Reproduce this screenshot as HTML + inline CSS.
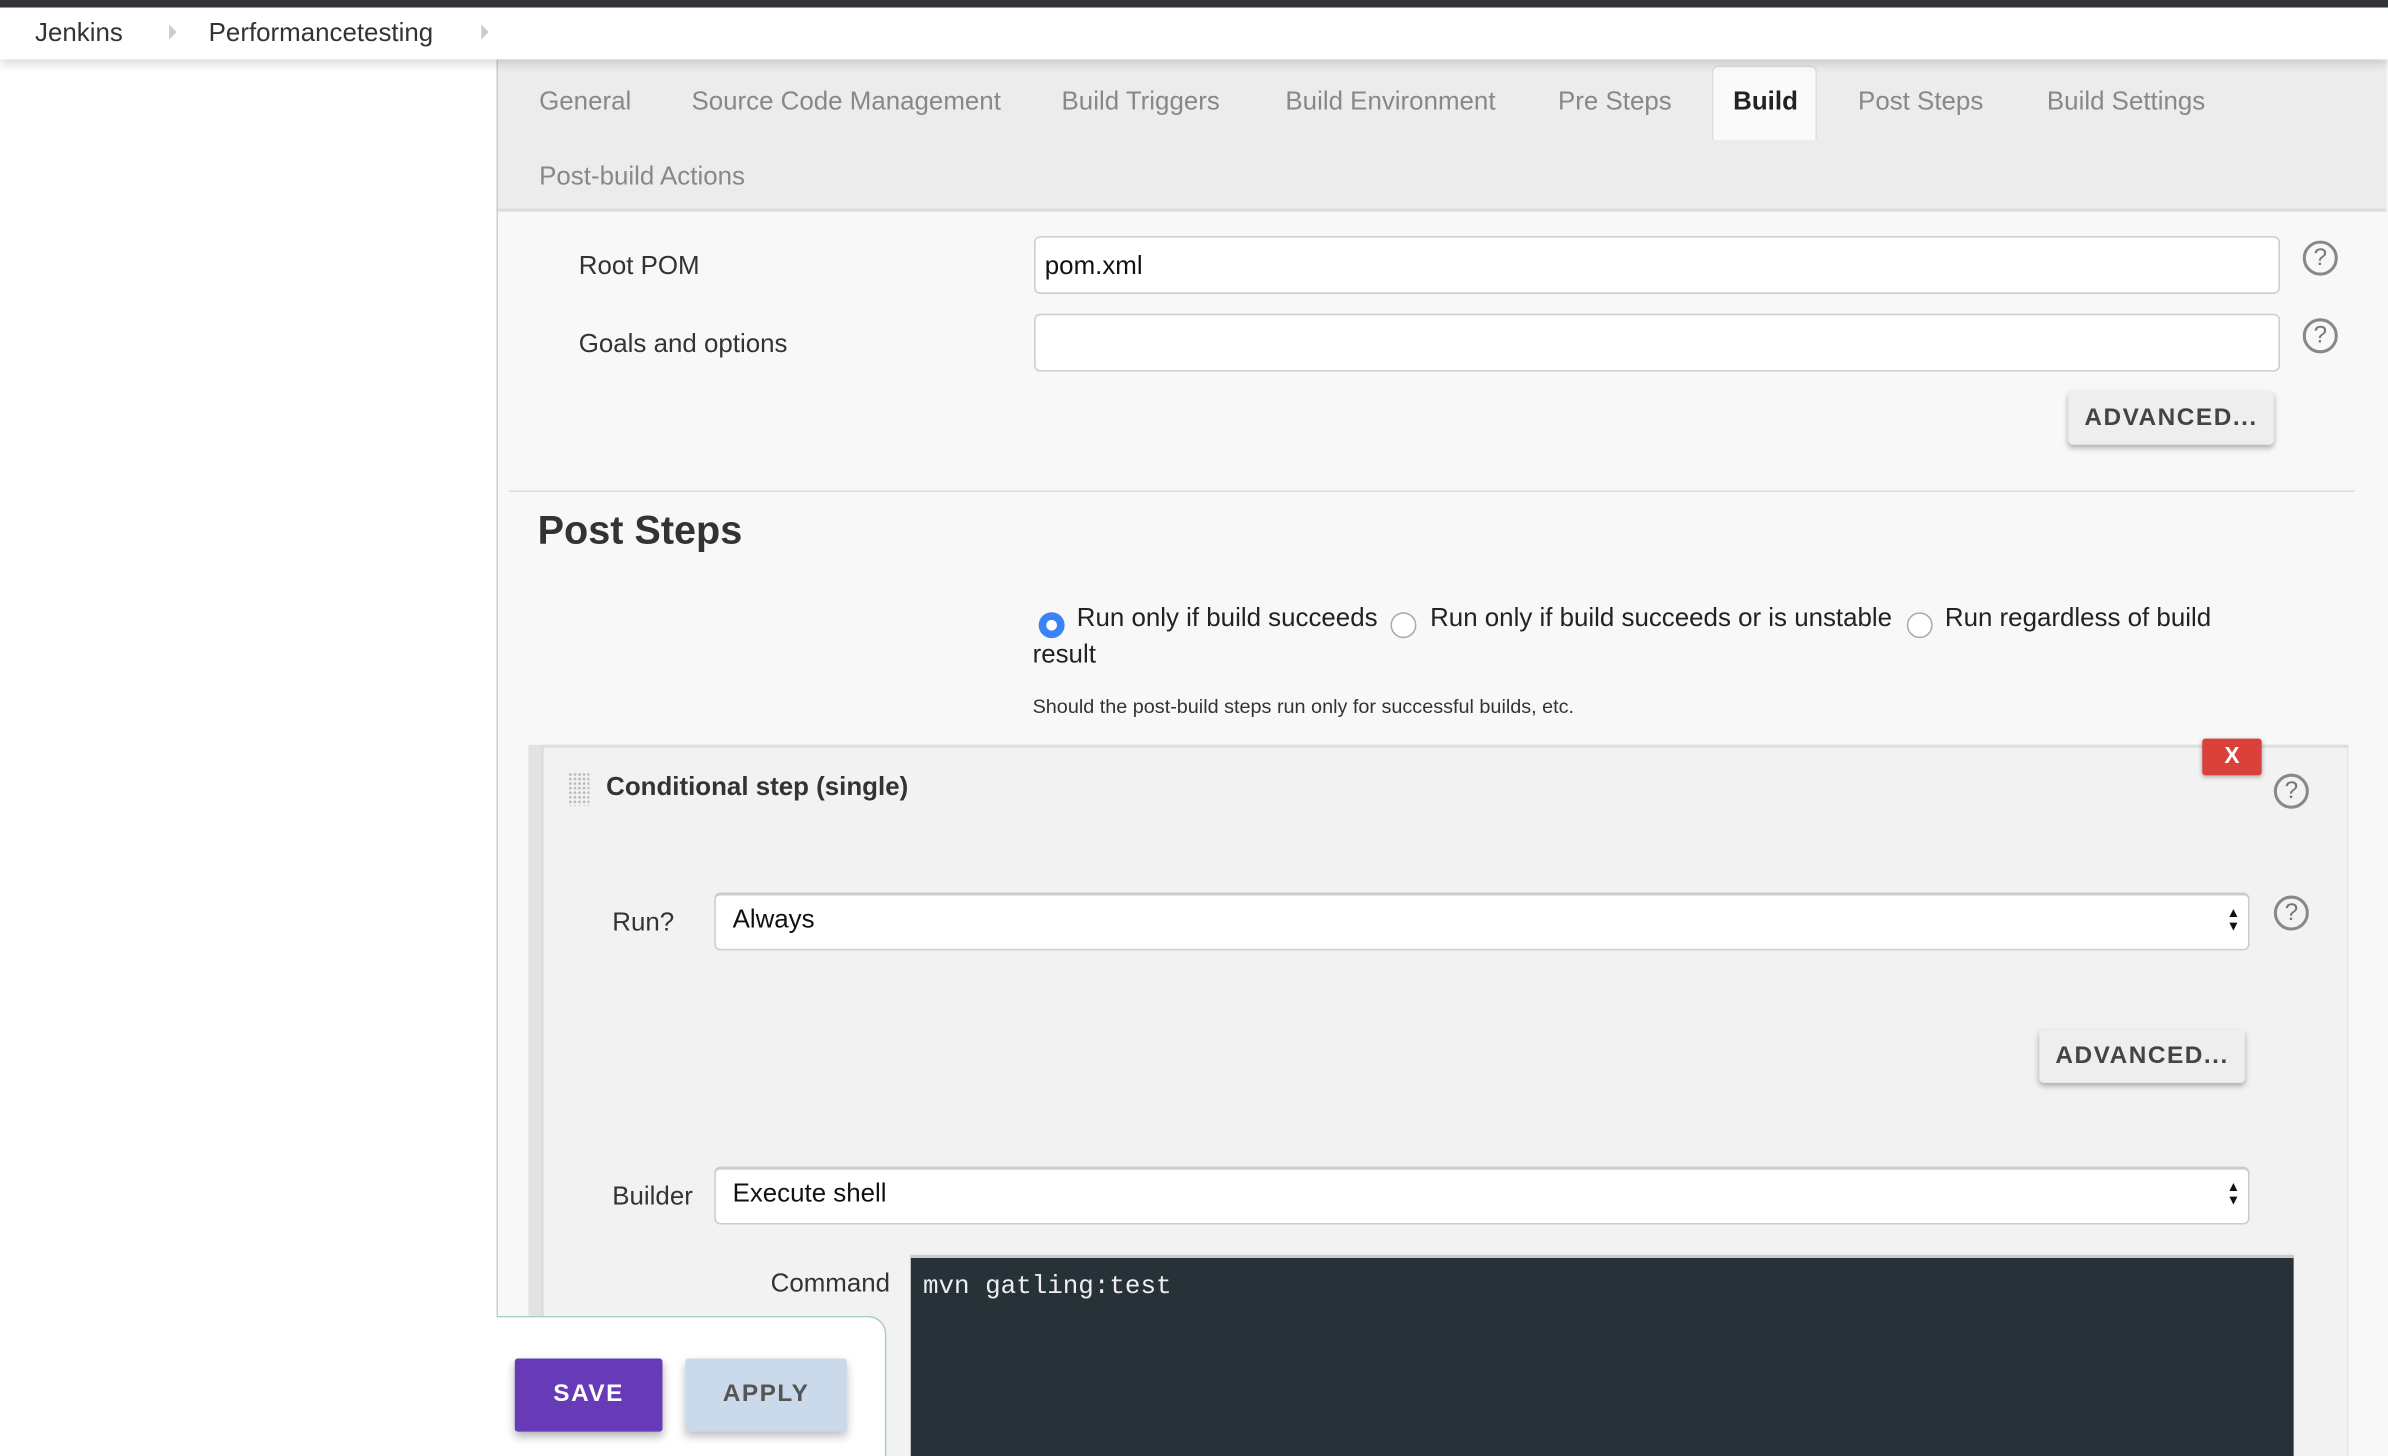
<!DOCTYPE html>
<html><head><meta charset="utf-8"><style>
html,body{margin:0;padding:0;}
body{width:2388px;height:1456px;overflow:hidden;background:#fff;font-family:"Liberation Sans",sans-serif;position:relative;}
#r{position:absolute;left:0;top:0;width:1568px;height:956px;transform:scale(1.5230);transform-origin:0 0;overflow:hidden;}
.a{position:absolute;}
.t{font-size:17px;color:#888;}
.lbl{font-size:17px;color:#333;}
.inp{background:#fff;border:1px solid #ccc;border-radius:3px;box-sizing:border-box;}
.help{width:23px;height:23px;border:2px solid #888;border-radius:50%;color:#777;font-size:16px;text-align:center;line-height:20px;box-sizing:border-box;}
.adv{background:#eee;border-radius:3px;box-shadow:0 2px 4px rgba(0,0,0,.3);font-weight:bold;font-size:16px;color:#444;letter-spacing:1px;text-align:center;}
.radio{width:17px;height:17px;border:1px solid #aaa;border-radius:50%;background:#fff;box-sizing:border-box;}
</style></head><body><div id="r">
<div class="a" style="left:0;top:0;width:1568px;height:5px;background:#333639"></div>
<div class="a" style="left:0;top:5px;width:1568px;height:34px;background:#fff;box-shadow:0 3px 6px rgba(0,0,0,.15);z-index:3"></div>
<div class="a lbl" style="left:23px;top:12px;z-index:4">Jenkins</div>
<div class="a" style="left:111px;top:16px;width:0;height:0;border-left:5px solid #ccc;border-top:5px solid transparent;border-bottom:5px solid transparent;z-index:4"></div>
<div class="a lbl" style="left:137px;top:12px;z-index:4">Performancetesting</div>
<div class="a" style="left:316px;top:16px;width:0;height:0;border-left:5px solid #ccc;border-top:5px solid transparent;border-bottom:5px solid transparent;z-index:4"></div>

<div class="a" style="left:326px;top:39px;width:1242px;height:917px;background:#f8f8f8;border-left:1px solid #ccc"></div>
<div class="a" style="left:327px;top:39px;width:1240px;height:98px;background:#ececec;border-bottom:2px solid #ddd"></div>
<div class="a t" style="left:354px;top:57px">General</div>
<div class="a t" style="left:454px;top:57px">Source Code Management</div>
<div class="a t" style="left:697px;top:57px">Build Triggers</div>
<div class="a t" style="left:844px;top:57px">Build Environment</div>
<div class="a t" style="left:1023px;top:57px">Pre Steps</div>
<div class="a" style="left:1124px;top:43px;width:67px;height:48px;background:#fafafa;border:1px solid #ddd;border-bottom:none;border-radius:4px 4px 0 0"></div>
<div class="a" style="left:1138px;top:57px;font-size:17px;font-weight:bold;color:#222">Build</div>
<div class="a t" style="left:1220px;top:57px">Post Steps</div>
<div class="a t" style="left:1344px;top:57px">Build Settings</div>
<div class="a t" style="left:354px;top:106px">Post-build Actions</div>

<div class="a lbl" style="left:380px;top:165px">Root POM</div>
<div class="a inp" style="left:679px;top:155px;width:818px;height:38px;border-radius:4px"></div>
<div class="a" style="left:686px;top:165px;font-size:17px;color:#111">pom.xml</div>
<div class="a help" style="left:1512px;top:158px">?</div>
<div class="a lbl" style="left:380px;top:216px">Goals and options</div>
<div class="a inp" style="left:679px;top:206px;width:818px;height:38px;border-radius:4px"></div>
<div class="a help" style="left:1512px;top:209px">?</div>
<div class="a adv" style="left:1358px;top:257px;width:135px;height:35px;line-height:35px">ADVANCED...</div>
<div class="a" style="left:334px;top:322px;width:1212px;height:1px;background:#ddd"></div>
<div class="a" style="left:353px;top:333px;font-size:26px;font-weight:bold;color:#333">Post Steps</div>

<div class="a radio" style="left:682px;top:402px;border:5px solid #3b82f6;background:#fff"></div>
<div class="a lbl" style="left:707px;top:396px;color:#222">Run only if build succeeds</div>
<div class="a radio" style="left:913px;top:402px"></div>
<div class="a lbl" style="left:939px;top:396px;color:#222">Run only if build succeeds or is unstable</div>
<div class="a radio" style="left:1252px;top:402px"></div>
<div class="a lbl" style="left:1277px;top:396px;color:#222">Run regardless of build</div>
<div class="a lbl" style="left:678px;top:420px;color:#222">result</div>
<div class="a" style="left:678px;top:456px;font-size:13px;color:#333">Should the post-build steps run only for successful builds, etc.</div>

<div class="a" style="left:347px;top:489px;width:8px;height:380px;background:#e3e3e3"></div>
<div class="a" style="left:355px;top:489px;width:1187px;height:467px;background:#f2f2f2;border-top:2px solid #ddd;border-left:2px solid #ddd;border-right:1px solid #e5e5e5;box-sizing:border-box"></div>
<div class="a" style="left:373px;top:507px;width:14px;height:22px;background-image:radial-gradient(#bbb 0.8px,transparent 1px);background-size:3px 3px"></div>
<div class="a" style="left:398px;top:507px;font-size:17px;font-weight:bold;color:#333">Conditional step (single)</div>
<div class="a" style="left:1446px;top:485px;width:39px;height:24px;background:#d9413a;color:#fff;font-weight:bold;font-size:15px;text-align:center;line-height:24px;border-radius:2px;box-shadow:0 1px 3px rgba(0,0,0,.3)">X</div>
<div class="a help" style="left:1493px;top:508px">?</div>

<div class="a lbl" style="left:402px;top:596px">Run?</div>
<div class="a inp" style="left:469px;top:586px;width:1008px;height:38px;border-top:2px solid #ccc;border-radius:4px"></div>
<div class="a" style="left:481px;top:594px;font-size:17px;color:#111">Always</div>
<div class="a" style="left:1462px;top:595px;font-size:9px;line-height:9px;color:#111">▲<br>▼</div>
<div class="a help" style="left:1493px;top:588px">?</div>
<div class="a adv" style="left:1339px;top:676px;width:135px;height:35px;line-height:35px">ADVANCED...</div>

<div class="a lbl" style="left:402px;top:776px">Builder</div>
<div class="a inp" style="left:469px;top:766px;width:1008px;height:38px;border-top:2px solid #ccc;border-radius:4px"></div>
<div class="a" style="left:481px;top:774px;font-size:17px;color:#111">Execute shell</div>
<div class="a" style="left:1462px;top:775px;font-size:9px;line-height:9px;color:#111">▲<br>▼</div>

<div class="a lbl" style="left:506px;top:833px">Command</div>
<div class="a" style="left:598px;top:824px;width:908px;height:140px;background:#263238;border-top:2px solid #ccc"></div>
<div class="a" style="left:606px;top:836px;font-family:'Liberation Mono',monospace;font-size:17px;color:#eee">mvn gatling:test</div>

<div class="a" style="left:326px;top:864px;width:256px;height:100px;background:#fff;border:1px solid #a8d0bd;border-left:none;border-radius:0 12px 0 0;box-sizing:border-box"></div>
<div class="a" style="left:338px;top:892px;width:97px;height:48px;background:#673ab7;color:#fff;font-weight:bold;font-size:16px;letter-spacing:1px;text-align:center;line-height:48px;border-radius:2px;box-shadow:0 3px 6px rgba(0,0,0,.3)">SAVE</div>
<div class="a" style="left:450px;top:892px;width:106px;height:48px;background:#cadaeb;color:#555;font-weight:bold;font-size:16px;letter-spacing:1px;text-align:center;line-height:48px;border-radius:2px;box-shadow:0 3px 6px rgba(0,0,0,.25)">APPLY</div>
</div></body></html>
